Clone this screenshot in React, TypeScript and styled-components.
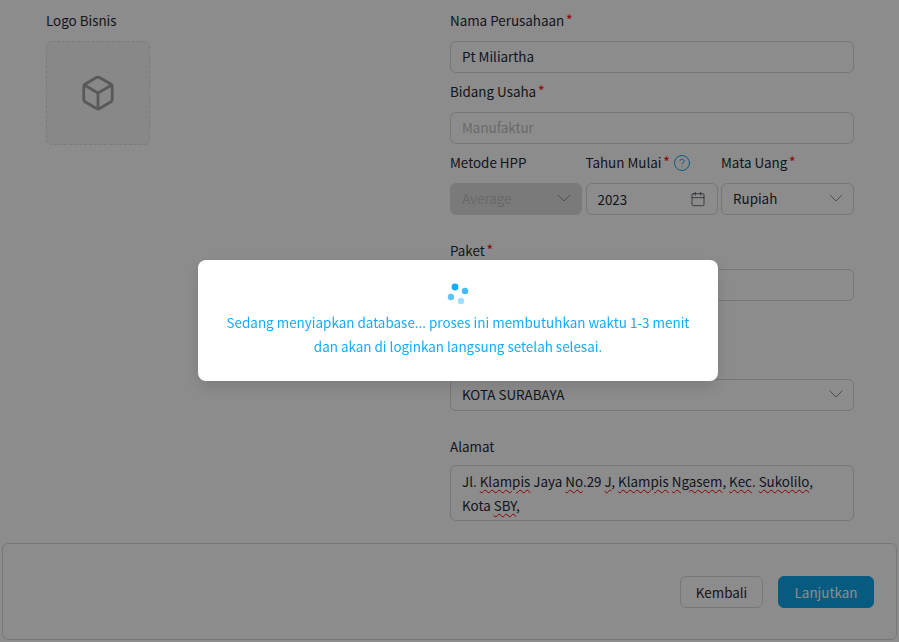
import React from "react";
import styled, { createGlobalStyle } from "styled-components";
import { Box, Calendar, ChevronDown, CircleHelp } from "lucide-react";

const colors = {
  text: "#1f2937",
  primary: "#12acff",
  button: "#0ea5e9",
  border: "#d9d9d9",
  muted: "#bfbfbf",
};

const GlobalStyle = createGlobalStyle`
  html, body {
    margin: 0;
    height: 100%;
    background: #fff;
    overflow: hidden;
    font-family: "Noto Sans CJK SC", "Noto Sans", sans-serif;
    font-size: 13.4px;
    color: ${colors.text};
  }
  * { box-sizing: border-box; }
`;

const Page = styled.div`
  display: flex;
  flex-direction: column;
  height: 642px;
`;

const FormGrid = styled.div`
  flex: 1;
  display: grid;
  grid-template-columns: 404px 404px;
  padding: 10px 45px 0 46px;
  align-content: start;
`;

const LogoColumn = styled.div`
  display: flex;
  flex-direction: column;
`;

const FieldColumn = styled.div`
  display: flex;
  flex-direction: column;
`;

const Field = styled.div<{ $gap?: number }>`
  display: flex;
  flex-direction: column;
  margin-bottom: ${(p) => p.$gap ?? 8}px;
`;

const Label = styled.label<{ $near?: boolean }>`
  display: flex;
  align-items: center;
  height: 21px;
  margin-top: ${(p) => (p.$near ? 2 : 0)}px;
  margin-bottom: ${(p) => (p.$near ? 8 : 10)}px;
  line-height: 21px;
`;

const Required = styled.span`
  align-self: flex-start;
  margin-left: 2px;
  color: #ff1f1f;
  font-size: 12px;
  font-weight: 700;
  line-height: 18px;
`;

const HelpIcon = styled(CircleHelp)`
  margin-left: 3px;
  color: ${colors.button};
`;

const UploadBox = styled.div`
  width: 104px;
  height: 104px;
  display: flex;
  align-items: center;
  justify-content: center;
  background: #f8f8f8;
  border: 1px dashed #e0e0e0;
  border-radius: 6px;
  color: #a3a3a3;
`;

const TextInput = styled.input`
  width: 100%;
  height: 32px;
  padding: 0 11px 2px;
  border: 1px solid ${colors.border};
  border-radius: 6px;
  background: #fff;
  font: inherit;
  color: ${colors.text};
  outline: none;

  &::placeholder {
    color: ${colors.muted};
  }
`;

const SelectBox = styled.div<{ $disabled?: boolean }>`
  display: flex;
  align-items: center;
  justify-content: space-between;
  height: 32px;
  padding: 0 11px 2px;
  border: 1px solid ${(p) => (p.$disabled ? "#dedede" : colors.border)};
  border-radius: 6px;
  background: ${(p) => (p.$disabled ? "#dedede" : "#fff")};
  color: ${(p) => (p.$disabled ? colors.muted : colors.text)};
`;

const DateBox = styled(SelectBox)`
  padding-bottom: 0;
`;

const SelectIcon = styled(ChevronDown)`
  color: #8c8c8c;
  margin-right: -6px;
`;

const TripleRow = styled.div`
  display: grid;
  grid-template-columns: 132px 132px 133px;
  column-gap: 3.5px;
  margin-bottom: 15px;
`;

const AddressBox = styled.div`
  height: 56px;
  padding: 3px 11px;
  border: 1px solid ${colors.border};
  border-radius: 6px;
  line-height: 24px;
`;

const Misspelled = styled.span`
  text-decoration: underline wavy #ff0000 1px;
  text-underline-offset: 2px;
`;

const Footer = styled.div`
  display: flex;
  justify-content: flex-end;
  gap: 15px;
  height: 97px;
  margin: 0 2px 2px;
  padding: 32px 22px;
  border: 1px solid ${colors.border};
  border-radius: 6px;
`;

const Button = styled.button<{ $primary?: boolean; $width: number }>`
  width: ${(p) => p.$width}px;
  height: 32px;
  padding: 0;
  border: 1px solid ${(p) => (p.$primary ? colors.button : colors.border)};
  border-radius: 6px;
  background: ${(p) => (p.$primary ? colors.button : "#fff")};
  color: ${(p) => (p.$primary ? "#fff" : colors.text)};
  font: inherit;
`;

const Overlay = styled.div`
  position: fixed;
  inset: 0;
  display: flex;
  align-items: flex-start;
  justify-content: center;
  padding-top: 260px;
  padding-left: 17px;
  background: rgba(0, 0, 0, 0.45);
`;

const Modal = styled.div`
  width: 520px;
  height: 121px;
  display: flex;
  flex-direction: column;
  align-items: center;
  padding-top: 20px;
  border-radius: 8px;
  background: #fff;
  box-shadow: 0 6px 16px rgba(0, 0, 0, 0.12);
  color: ${colors.primary};
  text-align: center;
`;

const Spinner = styled.svg`
  display: block;
  margin-bottom: 4px;
`;

const Message = styled.p`
  margin: 0;
  font-size: 13.45px;
  line-height: 24px;
`;

const select = (value: string, disabled?: boolean) => (
  <SelectBox $disabled={disabled}>
    {value}
    <SelectIcon size={24} strokeWidth={1} />
  </SelectBox>
);

const App = () => {
  return (
    <Page>
      <GlobalStyle />
      <FormGrid>
        <LogoColumn>
          <Label>Logo Bisnis</Label>
          <UploadBox>
            <Box size={38} strokeWidth={1.8} />
          </UploadBox>
        </LogoColumn>
        <FieldColumn>
          <Field>
            <Label>
              Nama Perusahaan<Required>*</Required>
            </Label>
            <TextInput readOnly value="Pt Miliartha" />
          </Field>
          <Field>
            <Label>
              Bidang Usaha<Required>*</Required>
            </Label>
            <TextInput readOnly placeholder="Manufaktur" />
          </Field>
          <TripleRow>
            <Field>
              <Label>Metode HPP</Label>
              {select("Average", true)}
            </Field>
            <Field>
              <Label>
                Tahun Mulai<Required>*</Required>
                <HelpIcon size={18} strokeWidth={1.3} />
              </Label>
              <DateBox>
                2023
                <Calendar size={16} strokeWidth={1} />
              </DateBox>
            </Field>
            <Field>
              <Label>
                Mata Uang<Required>*</Required>
              </Label>
              {select("Rupiah")}
            </Field>
          </TripleRow>
          <Field $gap={78}>
            <Label $near>
              Paket<Required>*</Required>
            </Label>
            {select("")}
          </Field>
          <Field $gap={23}>{select("KOTA SURABAYA")}</Field>
          <Field>
            <Label $near>Alamat</Label>
            <AddressBox>
              Jl. <Misspelled>Klampis</Misspelled> Jaya <Misspelled>No</Misspelled>.29{" "}
              <Misspelled>J</Misspelled>, <Misspelled>Klampis</Misspelled>{" "}
              <Misspelled>Ngasem</Misspelled>, <Misspelled>Kec</Misspelled>.{" "}
              <Misspelled>Sukolilo</Misspelled>,
              <br />
              Kota <Misspelled>SBY</Misspelled>,
            </AddressBox>
          </Field>
        </FieldColumn>
      </FormGrid>
      <Footer>
        <Button $width={83}>Kembali</Button>
        <Button $primary $width={96}>
          Lanjutkan
        </Button>
      </Footer>
      <Overlay>
        <Modal>
          <Spinner width="26" height="26" viewBox="0 0 26 26">
            <circle cx="10" cy="7" r="3.4" fill={colors.primary} />
            <circle cx="20" cy="11" r="3.2" fill={colors.primary} opacity="0.8" />
            <circle cx="6" cy="17" r="3.2" fill={colors.primary} opacity="0.7" />
            <circle cx="16" cy="21" r="3.2" fill={colors.primary} opacity="0.4" />
          </Spinner>
          <Message>
            Sedang menyiapkan database... proses ini membutuhkan waktu 1-3 menit
            <br />
            dan akan di loginkan langsung setelah selesai.
          </Message>
        </Modal>
      </Overlay>
    </Page>
  );
};

export default App;
